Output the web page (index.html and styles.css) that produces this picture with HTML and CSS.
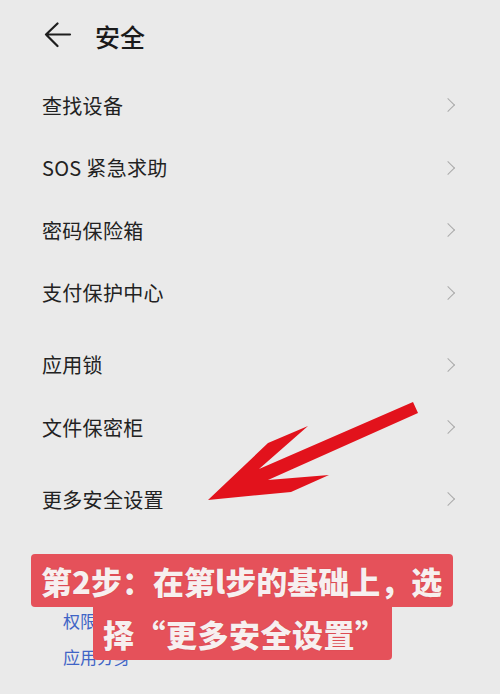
FILE: index.html
```html
<!DOCTYPE html>
<html lang="zh-CN">
<head>
<meta charset="utf-8">
<title>安全</title>
<link rel="stylesheet" href="styles.css">
</head>
<body>
<div class="page">
  <header class="header">
    <svg class="back" width="30" height="28" viewBox="0 0 30 28">
      <path d="M27 12.5H3 M14.5 1.5 L3 12.5 L14.5 24" fill="none" stroke="#1e1e1e" stroke-width="2.2" stroke-linecap="round" stroke-linejoin="round"/>
    </svg>
    <h1 class="title">安全</h1>
  </header>

  <ul class="group">
    <li class="row"><span>查找设备</span><i class="chev"></i></li>
    <li class="row"><span>SOS 紧急求助</span><i class="chev"></i></li>
    <li class="row"><span>密码保险箱</span><i class="chev"></i></li>
    <li class="row"><span>支付保护中心</span><i class="chev"></i></li>
  </ul>
  <ul class="group">
    <li class="row"><span>应用锁</span><i class="chev"></i></li>
    <li class="row"><span>文件保密柜</span><i class="chev"></i></li>
  </ul>
  <ul class="group">
    <li class="row"><span>更多安全设置</span><i class="chev"></i></li>
  </ul>

  <div class="links">
    <a class="link">权限管理</a>
    <a class="link">应用分身</a>
  </div>
</div>

<svg class="arrow" width="500" height="694" viewBox="0 0 500 694">
  <polygon points="208,500 268,443 308,426 259,469 413,402 418,413 268,480 329,475 291,492" fill="#e2121c"/>
</svg>

<div class="caption">
  <div class="cap cap1">第2步：在第l步的基础上，选</div>
  <div class="cap cap2">择<span class="q">“</span>更多安全设置<span class="q">”</span></div>
</div>
</body>
</html>
```

FILE: styles.css
```css
html, body {
  margin: 0;
  padding: 0;
  background: #eaeaea;
}
body {
  width: 500px;
  height: 694px;
  overflow: hidden;
  position: relative;
  font-family: "Noto Sans CJK SC", "Noto Sans", sans-serif;
  color: #1f1f1f;
}
.page {
  display: flex;
  flex-direction: column;
}
.header {
  height: 74px;
  display: flex;
  align-items: center;
  padding-left: 43px;
  box-sizing: border-box;
}
.back {
  display: block;
  margin-top: -2px;
}
.title {
  margin: -2px 0 0 22px;
  font-size: 25px;
  font-weight: 500;
  line-height: 1;
  color: #1a1a1a;
}
.group {
  list-style: none;
  margin: 0 0 9.5px 0;
  padding: 0;
}
.row {
  height: 62.5px;
  display: flex;
  align-items: center;
  justify-content: space-between;
  padding: 0 45px 0 42px;
  font-size: 20px;
  color: #222;
  letter-spacing: 0.3px;
}
.chev {
  width: 9px;
  height: 9px;
  border-top: 1.8px solid #ababab;
  border-right: 1.8px solid #ababab;
  transform: rotate(45deg);
  margin-right: 2px;
}
.links {
  display: flex;
  flex-direction: column;
  gap: 14px;
  padding: 70px 0 0 63px;
}
.link {
  font-size: 17px;
  line-height: 22px;
  color: #3f64c6;
}
.arrow {
  position: absolute;
  left: 0;
  top: 0;
  pointer-events: none;
}
.caption {
  position: absolute;
  left: 31px;
  top: 554px;
  display: flex;
  flex-direction: column;
  align-items: flex-start;
}
.cap {
  background: #e5515a;
  color: #f7efef;
  font-weight: 900;
  font-size: 31px;
  line-height: 53px;
  white-space: nowrap;
  text-shadow: 0 0 1px rgba(120, 20, 20, 0.35);
}
.cap1 {
  width: 422px;
  height: 53px;
  box-sizing: border-box;
  padding-left: 10px;
  border-radius: 4px;
  letter-spacing: 0;
}
.cap2 {
  margin-left: 62px;
  width: 299px;
  height: 53px;
  box-sizing: border-box;
  padding-left: 10px;
  border-radius: 0 0 4px 4px;
  letter-spacing: 0.5px;
}
.q {
  font-family: "Noto Sans CJK SC", sans-serif;
}
```
